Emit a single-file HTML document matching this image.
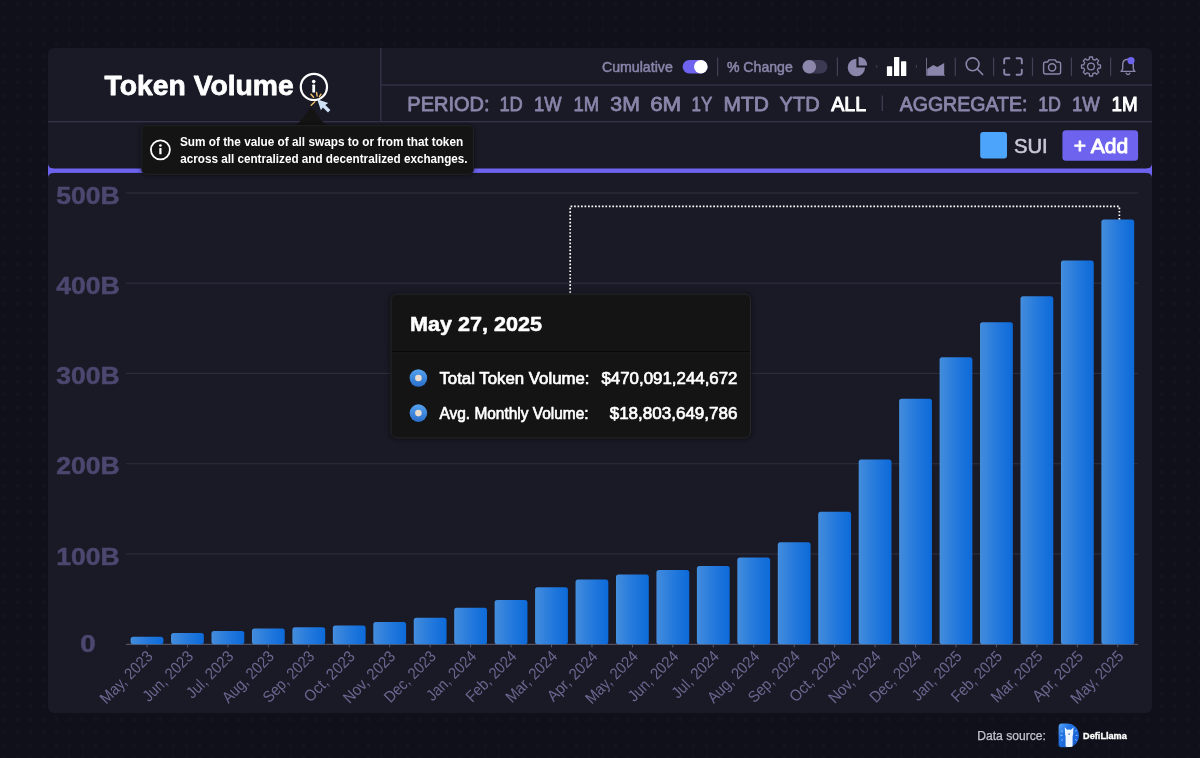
<!DOCTYPE html>
<html lang="en">
<head>
<meta charset="utf-8">
<title>Token Volume</title>
<style>
html,body{margin:0;padding:0;background:#10101a;}
body{width:1200px;height:758px;overflow:hidden;font-family:"Liberation Sans", Arial, Helvetica, sans-serif;}
#stage{position:relative;width:1200px;height:758px;background-color:#10101a;
 background-image:radial-gradient(circle, #14141f 1.4px, rgba(20,20,31,0) 2.6px);
 background-size:13px 13px;background-position:-2px -2px;}
#card{position:absolute;left:48px;top:48px;width:1104px;height:665px;background:#1a1a26;border-radius:6px;}
svg{position:absolute;left:0;top:0;will-change:transform;}
text{font-family:"Liberation Sans", Arial, Helvetica, sans-serif;white-space:pre;}
</style>
</head>
<body>
<div id="stage">
<div id="card"></div>
<svg width="1200" height="758" viewBox="0 0 1200 758">
<defs>
<linearGradient id="barg" x1="0" y1="0" x2="1" y2="0">
<stop offset="0" stop-color="#4690e0"/>
<stop offset="0.06" stop-color="#408adc"/>
<stop offset="0.55" stop-color="#2278dc"/>
<stop offset="1" stop-color="#0c6ad9"/>
</linearGradient>
<linearGradient id="dotg" x1="0" y1="0" x2="0" y2="1">
<stop offset="0" stop-color="#55a2ee"/>
<stop offset="1" stop-color="#2a6fcb"/>
</linearGradient>
<linearGradient id="llg" x1="0" y1="0" x2="1" y2="0.9">
<stop offset="0" stop-color="#5aa6f6"/>
<stop offset="0.35" stop-color="#2273e3"/>
<stop offset="1" stop-color="#1559cf"/>
</linearGradient>
<filter id="soft" x="-10%" y="-20%" width="120%" height="140%"><feGaussianBlur stdDeviation="2"/></filter>
</defs>

<g id="header-lines">
<rect x="48" y="121" width="1104" height="1.4" fill="#35334a"/>
<rect x="380.2" y="48" width="1.3" height="73.5" fill="#35334a"/>
<rect x="381" y="84.4" width="771" height="1.3" fill="#35334a"/>
</g>
<g id="title">
<text x="104.59" y="95.20" font-size="28.2" font-weight="bold" fill="#ffffff" stroke="#ffffff" stroke-width="0.8" stroke-linejoin="round" textLength="189.11" lengthAdjust="spacingAndGlyphs">Token Volume</text>
<circle cx="313.9" cy="86.9" r="13.1" fill="none" stroke="#fff" stroke-width="2.2"/>
<circle cx="313.7" cy="81.6" r="1.8" fill="#fff"/>
<rect x="312.3" y="84.6" width="2.8" height="8" rx="0.6" fill="#fff"/>
</g>
<g id="controls">
<text x="601.93" y="71.80" font-size="14.4" font-weight="normal" fill="#8a85aa" stroke="#8a85aa" stroke-width="0.5" stroke-linejoin="round" textLength="70.87" lengthAdjust="spacingAndGlyphs">Cumulative</text>
<rect x="682.6" y="60" width="25" height="13.4" rx="6.7" fill="#6d63ef"/>
<circle cx="700.8" cy="66.7" r="6.8" fill="#fff"/>
<rect x="717.0" y="57.5" width="1.2" height="18.3" fill="#434158"/>
<text x="726.95" y="71.80" font-size="14.4" font-weight="normal" fill="#8a85aa" stroke="#8a85aa" stroke-width="0.5" stroke-linejoin="round" textLength="65.79" lengthAdjust="spacingAndGlyphs">% Change</text>
<rect x="802.4" y="60" width="25" height="13.4" rx="6.7" fill="#3b3a52"/>
<circle cx="809.3" cy="66.7" r="6.8" fill="#8d88ab"/>
<rect x="836.8" y="57.5" width="1.2" height="18.3" fill="#434158"/>
<path d="M856.4 58.8 A8.7 8.7 0 1 0 865.1 67.5 L856.4 67.5 Z" fill="#8a85aa"/>
<path d="M858.6 56.8 A8.6 8.6 0 0 1 867.2 65.4 L858.6 65.4 Z" fill="#8a85aa"/>
<rect x="876.3" y="65" width="0.9" height="3" fill="#434158"/>
<rect x="886.9" y="66.3" width="5.3" height="9.7" rx="0.6" fill="#fff"/>
<rect x="894" y="56.9" width="5.3" height="19.1" rx="0.6" fill="#fff"/>
<rect x="901" y="61.3" width="5.3" height="14.7" rx="0.6" fill="#fff"/>
<rect x="915.9" y="65" width="0.9" height="3" fill="#434158"/>
<path d="M926.5 57.8 L926.5 75.4 L945 75.4" fill="none" stroke="#8a85aa" stroke-width="1" stroke-opacity="0.75"/>
<path d="M927.2 75.2 L927.2 69 L933.3 64.9 L937.3 67.1 L944.2 62.9 L944.2 75.2 Z" fill="#8a85aa"/>
<rect x="954.7" y="57.5" width="1.2" height="18.3" fill="#434158"/>
<circle cx="972.6" cy="64.3" r="6.4" fill="none" stroke="#8a85aa" stroke-width="1.6"/>
<path d="M977.3 69 L982.6 74.5" stroke="#8a85aa" stroke-width="1.7" stroke-linecap="round"/>
<rect x="993.0" y="57.5" width="1.2" height="18.3" fill="#434158"/>
<path d="M1004.2 63.4 V60.2 a2 2 0 0 1 2 -2 H1009.4 M1016.6 58.2 H1019.8 a2 2 0 0 1 2 2 V63.4 M1021.8 69.6 V72.8 a2 2 0 0 1 -2 2 H1016.6 M1009.4 74.8 H1006.2 a2 2 0 0 1 -2 -2 V69.6" fill="none" stroke="#8a85aa" stroke-width="1.9" stroke-linecap="round"/>
<rect x="1031.9" y="57.5" width="1.2" height="18.3" fill="#434158"/>
<path d="M1045.6 62 H1047.6 L1049 59.9 H1055.2 L1056.6 62 H1058.6 a2 2 0 0 1 2 2 V72 a2 2 0 0 1 -2 2 H1045.6 a2 2 0 0 1 -2 -2 V64 a2 2 0 0 1 2 -2 Z" fill="none" stroke="#8a85aa" stroke-width="1.4" stroke-linejoin="round"/>
<circle cx="1052.1" cy="67.3" r="3.6" fill="none" stroke="#8a85aa" stroke-width="1.5"/>
<rect x="1070.8" y="57.5" width="1.2" height="18.3" fill="#434158"/>
<path d="M1089.24 59.31 L1089.47 57.02 L1092.53 57.02 L1092.76 59.31 L1094.84 60.17 L1096.62 58.72 L1098.78 60.88 L1097.33 62.66 L1098.19 64.74 L1100.48 64.97 L1100.48 68.03 L1098.19 68.26 L1097.33 70.34 L1098.78 72.12 L1096.62 74.28 L1094.84 72.83 L1092.76 73.69 L1092.53 75.98 L1089.47 75.98 L1089.24 73.69 L1087.16 72.83 L1085.38 74.28 L1083.22 72.12 L1084.67 70.34 L1083.81 68.26 L1081.52 68.03 L1081.52 64.97 L1083.81 64.74 L1084.67 62.66 L1083.22 60.88 L1085.38 58.72 L1087.16 60.17 Z" fill="none" stroke="#8a85aa" stroke-width="1.3" stroke-linejoin="round"/>
<circle cx="1091.0" cy="66.5" r="3.4" fill="none" stroke="#8a85aa" stroke-width="1.3"/>
<rect x="1110.0" y="57.5" width="1.2" height="18.3" fill="#434158"/>
<path d="M1128 59.3 c-3.3 0 -5.3 2.4 -5.3 5.6 v3.6 c0 1.2 -0.8 2 -1.6 2.9 h13.8 c-0.8 -0.9 -1.6 -1.7 -1.6 -2.9 v-3.6 c0 -3.2 -2 -5.6 -5.3 -5.6 Z" fill="none" stroke="#8a85aa" stroke-width="1.4" stroke-linejoin="round"/>
<path d="M1126.2 73.2 a1.9 1.9 0 0 0 3.6 0" fill="none" stroke="#8a85aa" stroke-width="1.3" stroke-linecap="round"/>
<circle cx="1131" cy="60.6" r="3.6" fill="#6d63ef"/>
</g>
<g id="period">
<text x="407.37" y="110.60" font-size="20.3" font-weight="normal" fill="#8a85aa" stroke="#8a85aa" stroke-width="0.8" stroke-linejoin="round" textLength="82.12" lengthAdjust="spacingAndGlyphs">PERIOD:</text>
<text x="499.41" y="110.60" font-size="20.3" font-weight="normal" fill="#8a85aa" stroke="#8a85aa" stroke-width="0.8" stroke-linejoin="round" textLength="23.43" lengthAdjust="spacingAndGlyphs">1D</text>
<text x="533.94" y="110.60" font-size="20.3" font-weight="normal" fill="#8a85aa" stroke="#8a85aa" stroke-width="0.8" stroke-linejoin="round" textLength="27.52" lengthAdjust="spacingAndGlyphs">1W</text>
<text x="573.42" y="110.60" font-size="20.3" font-weight="normal" fill="#8a85aa" stroke="#8a85aa" stroke-width="0.8" stroke-linejoin="round" textLength="25.64" lengthAdjust="spacingAndGlyphs">1M</text>
<text x="610.33" y="110.60" font-size="20.3" font-weight="normal" fill="#8a85aa" stroke="#8a85aa" stroke-width="0.8" stroke-linejoin="round" textLength="29.54" lengthAdjust="spacingAndGlyphs">3M</text>
<text x="650.15" y="110.60" font-size="20.3" font-weight="normal" fill="#8a85aa" stroke="#8a85aa" stroke-width="0.8" stroke-linejoin="round" textLength="31.12" lengthAdjust="spacingAndGlyphs">6M</text>
<text x="691.58" y="110.60" font-size="20.3" font-weight="normal" fill="#8a85aa" stroke="#8a85aa" stroke-width="0.8" stroke-linejoin="round" textLength="20.77" lengthAdjust="spacingAndGlyphs">1Y</text>
<text x="723.53" y="110.60" font-size="20.3" font-weight="normal" fill="#8a85aa" stroke="#8a85aa" stroke-width="0.8" stroke-linejoin="round" textLength="45.40" lengthAdjust="spacingAndGlyphs">MTD</text>
<text x="779.54" y="110.60" font-size="20.3" font-weight="normal" fill="#8a85aa" stroke="#8a85aa" stroke-width="0.8" stroke-linejoin="round" textLength="40.09" lengthAdjust="spacingAndGlyphs">YTD</text>
<text x="831.17" y="110.60" font-size="20.3" font-weight="normal" fill="#ffffff" stroke="#ffffff" stroke-width="1.0" stroke-linejoin="round" textLength="34.95" lengthAdjust="spacingAndGlyphs">ALL</text>
<text x="899.68" y="110.60" font-size="20.3" font-weight="normal" fill="#8a85aa" stroke="#8a85aa" stroke-width="0.8" stroke-linejoin="round" textLength="127.80" lengthAdjust="spacingAndGlyphs">AGGREGATE:</text>
<text x="1038.21" y="110.60" font-size="20.3" font-weight="normal" fill="#8a85aa" stroke="#8a85aa" stroke-width="0.8" stroke-linejoin="round" textLength="22.81" lengthAdjust="spacingAndGlyphs">1D</text>
<text x="1071.92" y="110.60" font-size="20.3" font-weight="normal" fill="#8a85aa" stroke="#8a85aa" stroke-width="0.8" stroke-linejoin="round" textLength="27.93" lengthAdjust="spacingAndGlyphs">1W</text>
<text x="1111.54" y="110.60" font-size="20.3" font-weight="normal" fill="#ffffff" stroke="#ffffff" stroke-width="1.0" stroke-linejoin="round" textLength="26.15" lengthAdjust="spacingAndGlyphs">1M</text>
<rect x="881.7" y="95.6" width="1.2" height="15.4" fill="#434158"/>
</g>
<g id="legend">
<rect x="980.2" y="132" width="26.8" height="26.6" rx="3" fill="#4da5fb"/>
<text x="1013.90" y="153.20" font-size="20.8" font-weight="normal" fill="#c9c7d8" stroke="#c9c7d8" stroke-width="0.6" stroke-linejoin="round" textLength="33.76" lengthAdjust="spacingAndGlyphs">SUI</text>
<rect x="1062.4" y="130.2" width="75.7" height="30.6" rx="3.5" fill="#6d63ef"/>
<text x="1073.74" y="153.20" font-size="20.6" font-weight="normal" fill="#ffffff" stroke="#ffffff" stroke-width="0.95" stroke-linejoin="round" textLength="54.39" lengthAdjust="spacingAndGlyphs">+ Add</text>
</g>
<g id="accent">
<rect x="48" y="168.5" width="1104" height="4.4" fill="#6d63ef"/>
<path d="M48 164.3 Q49 168.5 53.5 168.5 L53.5 172.9 Q49 172.9 48 177.1 Z" fill="#6d63ef"/>
<path d="M1152 164.3 Q1151 168.5 1146.5 168.5 L1146.5 172.9 Q1151 172.9 1152 177.1 Z" fill="#6d63ef"/>
</g>
<g id="chart">
<rect x="126" y="553.35" width="1012" height="1.2" fill="#2d2c3d"/>
<rect x="126" y="463.10" width="1012" height="1.2" fill="#2d2c3d"/>
<rect x="126" y="372.85" width="1012" height="1.2" fill="#2d2c3d"/>
<rect x="126" y="282.60" width="1012" height="1.2" fill="#2d2c3d"/>
<rect x="126" y="192.35" width="1012" height="1.2" fill="#2d2c3d"/>
<text x="88.00" y="652.20" text-anchor="middle" font-size="24.7" font-weight="bold" fill="#4b4870" stroke="#4b4870" stroke-width="0.5" textLength="15.40" lengthAdjust="spacingAndGlyphs">0</text>
<text x="88.00" y="564.55" text-anchor="middle" font-size="24.7" font-weight="bold" fill="#4b4870" stroke="#4b4870" stroke-width="0.5" textLength="63.40" lengthAdjust="spacingAndGlyphs">100B</text>
<text x="88.00" y="474.30" text-anchor="middle" font-size="24.7" font-weight="bold" fill="#4b4870" stroke="#4b4870" stroke-width="0.5" textLength="63.40" lengthAdjust="spacingAndGlyphs">200B</text>
<text x="88.00" y="384.05" text-anchor="middle" font-size="24.7" font-weight="bold" fill="#4b4870" stroke="#4b4870" stroke-width="0.5" textLength="63.40" lengthAdjust="spacingAndGlyphs">300B</text>
<text x="88.00" y="293.80" text-anchor="middle" font-size="24.7" font-weight="bold" fill="#4b4870" stroke="#4b4870" stroke-width="0.5" textLength="63.40" lengthAdjust="spacingAndGlyphs">400B</text>
<text x="88.00" y="203.55" text-anchor="middle" font-size="24.7" font-weight="bold" fill="#4b4870" stroke="#4b4870" stroke-width="0.5" textLength="63.40" lengthAdjust="spacingAndGlyphs">500B</text>
<rect x="126" y="643.80" width="1012" height="1.1" fill="#5a5868"/>
<rect x="146.50" y="644.20" width="1" height="3.2" fill="#5a5868"/>
<rect x="130.60" y="636.80" width="32.8" height="7.40" rx="2.5" fill="url(#barg)"/>
<rect x="186.95" y="644.20" width="1" height="3.2" fill="#5a5868"/>
<rect x="171.05" y="633.00" width="32.8" height="11.20" rx="2.5" fill="url(#barg)"/>
<rect x="227.40" y="644.20" width="1" height="3.2" fill="#5a5868"/>
<rect x="211.50" y="631.00" width="32.8" height="13.20" rx="2.5" fill="url(#barg)"/>
<rect x="267.85" y="644.20" width="1" height="3.2" fill="#5a5868"/>
<rect x="251.95" y="628.50" width="32.8" height="15.70" rx="2.5" fill="url(#barg)"/>
<rect x="308.30" y="644.20" width="1" height="3.2" fill="#5a5868"/>
<rect x="292.40" y="627.30" width="32.8" height="16.90" rx="2.5" fill="url(#barg)"/>
<rect x="348.75" y="644.20" width="1" height="3.2" fill="#5a5868"/>
<rect x="332.85" y="625.50" width="32.8" height="18.70" rx="2.5" fill="url(#barg)"/>
<rect x="389.20" y="644.20" width="1" height="3.2" fill="#5a5868"/>
<rect x="373.30" y="622.00" width="32.8" height="22.20" rx="2.5" fill="url(#barg)"/>
<rect x="429.65" y="644.20" width="1" height="3.2" fill="#5a5868"/>
<rect x="413.75" y="617.70" width="32.8" height="26.50" rx="2.5" fill="url(#barg)"/>
<rect x="470.10" y="644.20" width="1" height="3.2" fill="#5a5868"/>
<rect x="454.20" y="607.70" width="32.8" height="36.50" rx="2.5" fill="url(#barg)"/>
<rect x="510.55" y="644.20" width="1" height="3.2" fill="#5a5868"/>
<rect x="494.65" y="600.00" width="32.8" height="44.20" rx="2.5" fill="url(#barg)"/>
<rect x="551.00" y="644.20" width="1" height="3.2" fill="#5a5868"/>
<rect x="535.10" y="587.20" width="32.8" height="57.00" rx="2.5" fill="url(#barg)"/>
<rect x="591.45" y="644.20" width="1" height="3.2" fill="#5a5868"/>
<rect x="575.55" y="579.60" width="32.8" height="64.60" rx="2.5" fill="url(#barg)"/>
<rect x="631.90" y="644.20" width="1" height="3.2" fill="#5a5868"/>
<rect x="616.00" y="574.40" width="32.8" height="69.80" rx="2.5" fill="url(#barg)"/>
<rect x="672.35" y="644.20" width="1" height="3.2" fill="#5a5868"/>
<rect x="656.45" y="570.00" width="32.8" height="74.20" rx="2.5" fill="url(#barg)"/>
<rect x="712.80" y="644.20" width="1" height="3.2" fill="#5a5868"/>
<rect x="696.90" y="566.10" width="32.8" height="78.10" rx="2.5" fill="url(#barg)"/>
<rect x="753.25" y="644.20" width="1" height="3.2" fill="#5a5868"/>
<rect x="737.35" y="557.60" width="32.8" height="86.60" rx="2.5" fill="url(#barg)"/>
<rect x="793.70" y="644.20" width="1" height="3.2" fill="#5a5868"/>
<rect x="777.80" y="542.30" width="32.8" height="101.90" rx="2.5" fill="url(#barg)"/>
<rect x="834.15" y="644.20" width="1" height="3.2" fill="#5a5868"/>
<rect x="818.25" y="511.70" width="32.8" height="132.50" rx="2.5" fill="url(#barg)"/>
<rect x="874.60" y="644.20" width="1" height="3.2" fill="#5a5868"/>
<rect x="858.70" y="459.60" width="32.8" height="184.60" rx="2.5" fill="url(#barg)"/>
<rect x="915.05" y="644.20" width="1" height="3.2" fill="#5a5868"/>
<rect x="899.15" y="398.70" width="32.8" height="245.50" rx="2.5" fill="url(#barg)"/>
<rect x="955.50" y="644.20" width="1" height="3.2" fill="#5a5868"/>
<rect x="939.60" y="357.20" width="32.8" height="287.00" rx="2.5" fill="url(#barg)"/>
<rect x="995.95" y="644.20" width="1" height="3.2" fill="#5a5868"/>
<rect x="980.05" y="322.30" width="32.8" height="321.90" rx="2.5" fill="url(#barg)"/>
<rect x="1036.40" y="644.20" width="1" height="3.2" fill="#5a5868"/>
<rect x="1020.50" y="296.30" width="32.8" height="347.90" rx="2.5" fill="url(#barg)"/>
<rect x="1076.85" y="644.20" width="1" height="3.2" fill="#5a5868"/>
<rect x="1060.95" y="260.40" width="32.8" height="383.80" rx="2.5" fill="url(#barg)"/>
<rect x="1117.30" y="644.20" width="1" height="3.2" fill="#5a5868"/>
<rect x="1101.40" y="219.60" width="32.8" height="424.60" rx="2.5" fill="url(#barg)"/>
<text transform="translate(153.70 657.30) rotate(-45)" text-anchor="end" font-size="16" fill="#6a668f" textLength="67" lengthAdjust="spacingAndGlyphs">May, 2023</text>
<text transform="translate(194.15 657.30) rotate(-45)" text-anchor="end" font-size="16" fill="#6a668f" textLength="64" lengthAdjust="spacingAndGlyphs">Jun, 2023</text>
<text transform="translate(234.60 657.30) rotate(-45)" text-anchor="end" font-size="16" fill="#6a668f" textLength="59.5" lengthAdjust="spacingAndGlyphs">Jul, 2023</text>
<text transform="translate(275.05 657.30) rotate(-45)" text-anchor="end" font-size="16" fill="#6a668f" textLength="66" lengthAdjust="spacingAndGlyphs">Aug, 2023</text>
<text transform="translate(315.50 657.30) rotate(-45)" text-anchor="end" font-size="16" fill="#6a668f" textLength="65.5" lengthAdjust="spacingAndGlyphs">Sep, 2023</text>
<text transform="translate(355.95 657.30) rotate(-45)" text-anchor="end" font-size="16" fill="#6a668f" textLength="64.5" lengthAdjust="spacingAndGlyphs">Oct, 2023</text>
<text transform="translate(396.40 657.30) rotate(-45)" text-anchor="end" font-size="16" fill="#6a668f" textLength="66.5" lengthAdjust="spacingAndGlyphs">Nov, 2023</text>
<text transform="translate(436.85 657.30) rotate(-45)" text-anchor="end" font-size="16" fill="#6a668f" textLength="65.5" lengthAdjust="spacingAndGlyphs">Dec, 2023</text>
<text transform="translate(477.30 657.30) rotate(-45)" text-anchor="end" font-size="16" fill="#6a668f" textLength="63" lengthAdjust="spacingAndGlyphs">Jan, 2024</text>
<text transform="translate(517.75 657.30) rotate(-45)" text-anchor="end" font-size="16" fill="#6a668f" textLength="64.5" lengthAdjust="spacingAndGlyphs">Feb, 2024</text>
<text transform="translate(558.20 657.30) rotate(-45)" text-anchor="end" font-size="16" fill="#6a668f" textLength="65.5" lengthAdjust="spacingAndGlyphs">Mar, 2024</text>
<text transform="translate(598.65 657.30) rotate(-45)" text-anchor="end" font-size="16" fill="#6a668f" textLength="64" lengthAdjust="spacingAndGlyphs">Apr, 2024</text>
<text transform="translate(639.10 657.30) rotate(-45)" text-anchor="end" font-size="16" fill="#6a668f" textLength="67" lengthAdjust="spacingAndGlyphs">May, 2024</text>
<text transform="translate(679.55 657.30) rotate(-45)" text-anchor="end" font-size="16" fill="#6a668f" textLength="64" lengthAdjust="spacingAndGlyphs">Jun, 2024</text>
<text transform="translate(720.00 657.30) rotate(-45)" text-anchor="end" font-size="16" fill="#6a668f" textLength="59.5" lengthAdjust="spacingAndGlyphs">Jul, 2024</text>
<text transform="translate(760.45 657.30) rotate(-45)" text-anchor="end" font-size="16" fill="#6a668f" textLength="66" lengthAdjust="spacingAndGlyphs">Aug, 2024</text>
<text transform="translate(800.90 657.30) rotate(-45)" text-anchor="end" font-size="16" fill="#6a668f" textLength="65.5" lengthAdjust="spacingAndGlyphs">Sep, 2024</text>
<text transform="translate(841.35 657.30) rotate(-45)" text-anchor="end" font-size="16" fill="#6a668f" textLength="64.5" lengthAdjust="spacingAndGlyphs">Oct, 2024</text>
<text transform="translate(881.80 657.30) rotate(-45)" text-anchor="end" font-size="16" fill="#6a668f" textLength="66.5" lengthAdjust="spacingAndGlyphs">Nov, 2024</text>
<text transform="translate(922.25 657.30) rotate(-45)" text-anchor="end" font-size="16" fill="#6a668f" textLength="65.5" lengthAdjust="spacingAndGlyphs">Dec, 2024</text>
<text transform="translate(962.70 657.30) rotate(-45)" text-anchor="end" font-size="16" fill="#6a668f" textLength="63" lengthAdjust="spacingAndGlyphs">Jan, 2025</text>
<text transform="translate(1003.15 657.30) rotate(-45)" text-anchor="end" font-size="16" fill="#6a668f" textLength="64.5" lengthAdjust="spacingAndGlyphs">Feb, 2025</text>
<text transform="translate(1043.60 657.30) rotate(-45)" text-anchor="end" font-size="16" fill="#6a668f" textLength="65.5" lengthAdjust="spacingAndGlyphs">Mar, 2025</text>
<text transform="translate(1084.05 657.30) rotate(-45)" text-anchor="end" font-size="16" fill="#6a668f" textLength="64" lengthAdjust="spacingAndGlyphs">Apr, 2025</text>
<text transform="translate(1124.50 657.30) rotate(-45)" text-anchor="end" font-size="16" fill="#6a668f" textLength="67" lengthAdjust="spacingAndGlyphs">May, 2025</text>
<path d="M570.2 293 V206.4 H1119.4 V219.6" fill="none" stroke="#fff" stroke-width="1.7" stroke-dasharray="1.7 1.78"/>
</g>
<g id="info-tip">
<path d="M291.5 126.5 C297.5 125.5 302 120 309 109.6 Q311.2 106.4 313.4 109.6 C320.4 120 325 125.5 331 126.5 Z" fill="#141414"/>
<rect x="140.5" y="125" width="334" height="50.5" rx="7" fill="#000" opacity="0.45" filter="url(#soft)"/>
<rect x="141.7" y="125.7" width="331.8" height="48.6" rx="5" fill="#141414" stroke="#222226" stroke-width="1"/>
<circle cx="160.4" cy="149.8" r="9.5" fill="none" stroke="#fff" stroke-width="1.8"/>
<circle cx="160.4" cy="145.5" r="1.35" fill="#fff"/>
<rect x="159.3" y="148" width="2.2" height="6.3" rx="0.4" fill="#fff"/>
<text x="179.90" y="146.00" font-size="12.1" font-weight="bold" fill="#ffffff" textLength="283.30" lengthAdjust="spacingAndGlyphs">Sum of the value of all swaps to or from that token</text>
<text x="180.22" y="162.70" font-size="12.1" font-weight="bold" fill="#ffffff" textLength="287.41" lengthAdjust="spacingAndGlyphs">across all centralized and decentralized exchanges.</text>
</g>
<g id="cursor">
<g stroke="#f3c167" stroke-width="1.4" stroke-linecap="round">
<path d="M311 94.2 L313.6 97.2"/><path d="M316.6 92.4 L317.1 96"/><path d="M321 94.2 L319.4 96.6"/><path d="M311.2 105.2 L314.8 101.8"/>
</g>
<path d="M317.2 99.3 L328.2 103 L325.3 105 L330.4 110.1 L328 112.5 L322.9 107.4 L320.9 110.3 Z" fill="#cfe2f6"/>
</g>
<g id="value-tooltip">
<rect x="389.5" y="293" width="362.5" height="147" rx="8" fill="#000" opacity="0.45" filter="url(#soft)"/>
<rect x="391" y="294" width="359.5" height="144" rx="6" fill="#141414" stroke="#26262b" stroke-width="1"/>
<rect x="391.5" y="351.3" width="358.5" height="1.2" fill="#050505"/>
<rect x="391.5" y="352.5" width="358.5" height="0.8" fill="#212125"/>
<text x="409.95" y="331.30" font-size="20.3" font-weight="bold" fill="#ffffff" stroke="#ffffff" stroke-width="0.5" stroke-linejoin="round" textLength="132.09" lengthAdjust="spacingAndGlyphs">May 27, 2025</text>
<circle cx="418.4" cy="378.0" r="8.8" fill="url(#dotg)"/>
<circle cx="418.4" cy="378.0" r="3.3" fill="#ecdccd"/>
<circle cx="418.4" cy="413.1" r="8.8" fill="url(#dotg)"/>
<circle cx="418.4" cy="413.1" r="3.3" fill="#ecdccd"/>
<text x="439.39" y="384.10" font-size="17.3" font-weight="normal" fill="#ffffff" stroke="#ffffff" stroke-width="0.7" stroke-linejoin="round" textLength="150.17" lengthAdjust="spacingAndGlyphs">Total Token Volume:</text>
<text x="601.46" y="384.10" font-size="17.3" font-weight="normal" fill="#ffffff" stroke="#ffffff" stroke-width="0.7" stroke-linejoin="round" textLength="136.03" lengthAdjust="spacingAndGlyphs">$470,091,244,672</text>
<text x="439.52" y="418.90" font-size="17.3" font-weight="normal" fill="#ffffff" stroke="#ffffff" stroke-width="0.7" stroke-linejoin="round" textLength="149.02" lengthAdjust="spacingAndGlyphs">Avg. Monthly Volume:</text>
<text x="609.66" y="418.90" font-size="17.3" font-weight="normal" fill="#ffffff" stroke="#ffffff" stroke-width="0.7" stroke-linejoin="round" textLength="127.83" lengthAdjust="spacingAndGlyphs">$18,803,649,786</text>
</g>
<g id="footer">
<text x="977.23" y="740.40" font-size="11.9" font-weight="normal" fill="#c3c3cb" stroke="#c3c3cb" stroke-width="0.25" stroke-linejoin="round" textLength="68.77" lengthAdjust="spacingAndGlyphs">Data source:</text>
<path d="M1058.6 727 a3.4 3.4 0 0 1 3.4 -3.4 h5 c6.9 0 12 4.9 12 11.85 c0 6.95 -5.1 11.85 -12 11.85 h-5 a3.4 3.4 0 0 1 -3.4 -3.4 Z" fill="url(#llg)"/>
<g stroke="#a9d4ff" stroke-width="0.8" stroke-linecap="round"><path d="M1061.6 730.8 l0.9 0.6"/><path d="M1060.9 735.4 l1.1 0"/><path d="M1061.7 740.2 l0.9 -0.6"/><path d="M1076.4 730.6 l-0.9 0.6"/><path d="M1077.2 735.4 l-1.1 0"/><path d="M1076.4 740.2 l-0.9 -0.6"/></g>
<path d="M1064.7 727.2 L1067.2 729.7 Q1069.1 729.1 1071 729.7 L1073.5 727.2 L1073.2 731.4 Q1073.4 734.5 1072.6 736.5 L1072.6 746.4 Q1069.1 747.7 1065.6 746.4 L1065.6 736.5 Q1064.8 734.5 1065 731.4 Z" fill="#eef5ff"/>
<ellipse cx="1069.1" cy="734.1" rx="0.9" ry="0.8" fill="#4b78b8"/>
<text x="1083.12" y="739.30" font-size="8.9" font-weight="bold" fill="#ffffff" stroke="#ffffff" stroke-width="0.35" stroke-linejoin="round" textLength="43.73" lengthAdjust="spacingAndGlyphs">DefiLlama</text>
</g>
</svg>
</div>
</body>
</html>
